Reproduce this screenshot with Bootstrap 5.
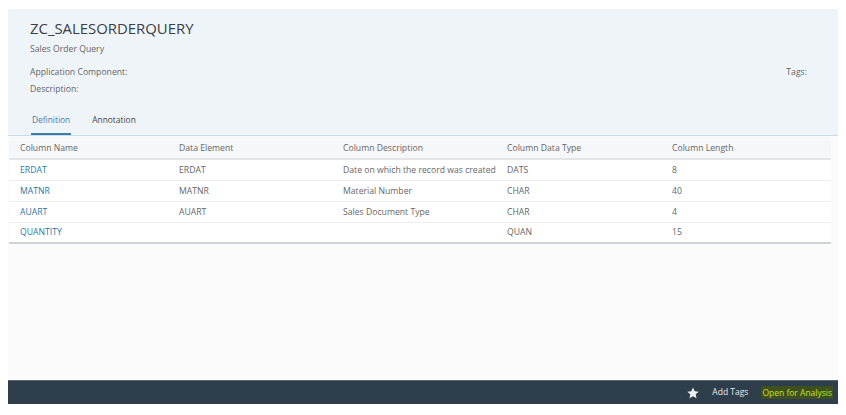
<!DOCTYPE html>
<html lang="en">
<head>
    <meta charset="UTF-8">
    <meta name="viewport" content="width=device-width, initial-scale=1.0">
    <title>ZC_SALESORDERQUERY</title>
    <link href="https://cdn.jsdelivr.net/npm/bootstrap@5.3.0/dist/css/bootstrap.min.css" rel="stylesheet">
    <style>
        html, body { height: 100%; }
        body { background: #fff; font-family: "Open Sans", "Liberation Sans", sans-serif; font-size: 8.67px; color: #666; overflow: hidden; }
        .app-frame { height: 395px; margin: 9px 8px 0; background: #fbfbfc; }
        .object-head { background: #eff4f9; height: 127px; padding: 9px 31px 0 22px; border-bottom: 1px solid #c9dbee; }
        .object-title { font-size: 14.9px; line-height: 20px; font-weight: 400; color: #3a3f44; margin: 0; }
        .object-sub { line-height: 14px; margin-top: 4px; }
        .object-meta { margin-top: 8px; line-height: 17px; }
        .tab-row { margin-top: 11px; gap: 20px; padding-left: 1px; font-size: 8.4px; }
        .tab-item { height: 26px; line-height: 22px; padding: 0 1px; color: #444; }
        .tab-item.is-active { color: #3f7ea6; border-bottom: 2px solid #3f7ea6; }
        .column-table { width: 822px; margin: 1px 0 0 1px; table-layout: fixed; --bs-table-bg: transparent; font-size: 8.67px; }
        .column-table th, .column-table td { height: 21px; padding: 2px 0 0 11px; vertical-align: middle; font-weight: 400; color: #666; border-bottom: 1px solid #eceef0; white-space: nowrap; }
        .column-table thead th { height: 22px; background: #f6f7f8; border-bottom: 2px solid #e3e5e8; }
        .column-table tbody tr { background: #fff; }
        .column-table tbody tr:last-child td { height: 21px; padding-top: 1px; border-bottom: 2px solid #cfd3d7; }
        .column-table a { color: #2b78a8; text-decoration: none; font-weight: 500; }
        .action-bar { height: 24px; background: #2f3e4b; border-top: 1px solid #5a6670; padding-right: 5px; gap: 13px; color: #e6eaed; font-size: 8.5px; }
        .action-star { margin-top: 1px; }
        .open-link { color: #c4e312; background: #3e5022; padding: 0 1px; line-height: 13px; }
    </style>
</head>
<body>
    <div class="app-frame d-flex flex-column">
        <div class="object-head flex-shrink-0">
            <h1 class="object-title">ZC_SALESORDERQUERY</h1>
            <div class="object-sub">Sales Order Query</div>
            <div class="d-flex justify-content-between object-meta">
                <div>
                    <div>Application Component:</div>
                    <div>Description:</div>
                </div>
                <div>Tags:</div>
            </div>
            <div class="d-flex tab-row">
                <div class="tab-item is-active">Definition</div>
                <div class="tab-item">Annotation</div>
            </div>
        </div>
        <div class="flex-grow-1">
            <table class="table column-table mb-0">
                <colgroup>
                    <col style="width: 159px">
                    <col style="width: 164px">
                    <col style="width: 164px">
                    <col style="width: 165px">
                    <col>
                </colgroup>
                <thead>
                    <tr>
                        <th>Column Name</th>
                        <th>Data Element</th>
                        <th>Column Description</th>
                        <th>Column Data Type</th>
                        <th>Column Length</th>
                    </tr>
                </thead>
                <tbody>
                    <tr><td><a href="#">ERDAT</a></td><td>ERDAT</td><td>Date on which the record was created</td><td>DATS</td><td>8</td></tr>
                    <tr><td><a href="#">MATNR</a></td><td>MATNR</td><td>Material Number</td><td>CHAR</td><td>40</td></tr>
                    <tr><td><a href="#">AUART</a></td><td>AUART</td><td>Sales Document Type</td><td>CHAR</td><td>4</td></tr>
                    <tr><td><a href="#">QUANTITY</a></td><td></td><td></td><td>QUAN</td><td>15</td></tr>
                </tbody>
            </table>
        </div>
        <div class="action-bar d-flex align-items-center justify-content-end flex-shrink-0">
            <svg class="action-star" width="12" height="12" viewBox="0 0 24 24" fill="#eef1f4"><path d="M12 1l3.4 7.4 8 .9-6 5.4 1.7 8L12 18.7l-7.1 4 1.7-8-6-5.4 8-.9z"/></svg>
            <span>Add Tags</span>
            <span class="open-link">Open for Analysis</span>
        </div>
    </div>
    <script src="https://cdn.jsdelivr.net/npm/bootstrap@5.3.0/dist/js/bootstrap.bundle.min.js"></script>
</body>
</html>
